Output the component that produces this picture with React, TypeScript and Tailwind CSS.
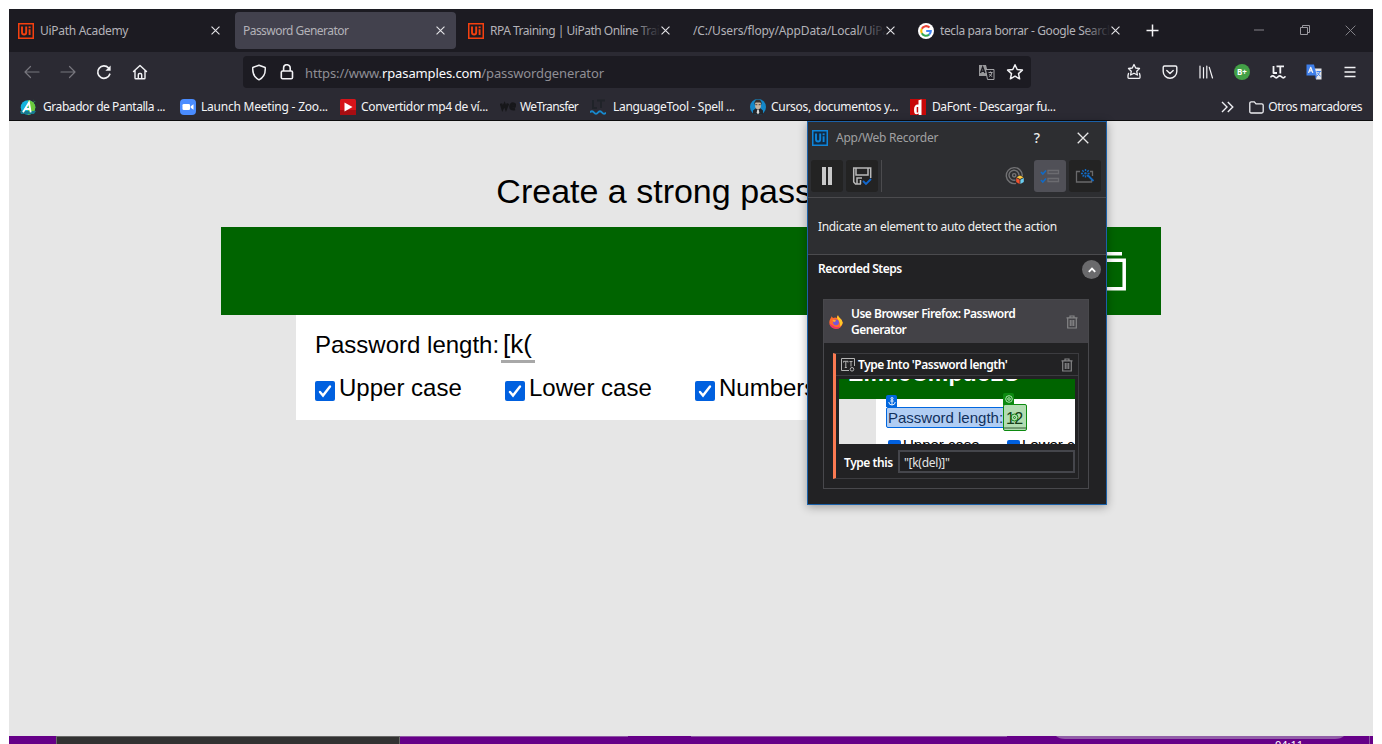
import type { ReactNode } from "react";

const ui = "font-['Noto_Sans',sans-serif]";

function UiLogo({ color, bg }: { color: string; bg: string }) {
  return (
    <svg width="16" height="16" viewBox="0 0 16 16" className="shrink-0">
      <rect width="16" height="16" fill={color} />
      <rect x="1.5" y="1.5" width="13" height="13" fill={bg} />
      <path d="M4 3.500v5.700q0 2.300 2.100 2.300t2.100-2.300V3.500M11.600 6.200v5.900" stroke={color} strokeWidth="1.900" fill="none" />
      <rect x="10.600" y="3.400" width="2" height="1.800" fill={color} />
    </svg>
  );
}

function GoogleLogo() {
  return (
    <svg width="16" height="16" viewBox="0 0 16 16" className="shrink-0">
      <circle cx="8" cy="8" r="8" fill="#fff" />
      <g fill="none" strokeWidth="2.1">
        <path d="M11.5 4.6A4.8 4.8 0 0 0 3.8 5.7" stroke="#ea4335" />
        <path d="M3.8 5.7a4.8 4.8 0 0 0 0 4.6" stroke="#fbbc05" />
        <path d="M3.8 10.3a4.8 4.8 0 0 0 7.3 1.3" stroke="#34a853" />
        <path d="M11.1 11.6A4.8 4.8 0 0 0 12.8 8H8.2" stroke="#4285f4" />
      </g>
    </svg>
  );
}

function Cross({ size, color, w }: { size: number; color: string; w: number }) {
  return (
    <svg width={size} height={size} viewBox="0 0 10 10" className="shrink-0">
      <path d="M.6.6l8.8 8.8M9.4.6L.6 9.4" stroke={color} strokeWidth={w} fill="none" />
    </svg>
  );
}

function Tab({ icon, title, fade, active, track }: { icon?: ReactNode; title: string; fade?: boolean; active?: boolean; track: string }) {
  return (
    <div className="flex h-full w-[225px] shrink-0 py-[3px] pr-1">
      <div className={"flex w-[221px] items-center rounded-[4px] pl-2 pr-[11.5px] " + (active ? "bg-[#42414d]" : "")}>
        {icon && <span className="mr-[6px] flex">{icon}</span>}
        <span className={"relative min-w-0 flex-1 overflow-hidden whitespace-nowrap text-[12px] leading-[18px] text-[#b3b2b8] " + track}>
          {title}
          {fade && <span className="absolute inset-y-0 right-0 w-7 bg-gradient-to-r from-transparent to-[#1c1b22]" />}
        </span>
        <Cross size={9} color="#e4e4e8" w={1.25} />
      </div>
    </div>
  );
}

function Bookmark({ icon, title, width, gap, track }: { icon: ReactNode; title: string; width: string; gap: string; track: string }) {
  return (
    <div className={"flex shrink-0 items-center " + width + " " + gap}>
      {icon}
      <span className={"whitespace-nowrap text-[12px] leading-[16px] text-[#f4f4f6] " + track}>{title}</span>
    </div>
  );
}

function ToolIcon({ children }: { children: ReactNode }) {
  return (
    <div className="flex w-9 shrink-0 items-center justify-center">
      <svg width="18" height="18" viewBox="0 0 18 18" fill="none" stroke="#f2f2f5" strokeWidth="1.4" strokeLinecap="round" strokeLinejoin="round">
        {children}
      </svg>
    </div>
  );
}

function TabBar() {
  const logo = <UiLogo color="#f4400f" bg="#1c1b22" />;
  return (
    <div className="flex h-[43px] bg-[#1c1b22] pl-px">
      <Tab icon={logo} title="UiPath Academy" track="tracking-[-0.3px]" />
      <Tab title="Password Generator" active track="tracking-[-0.54px]" />
      <Tab icon={logo} title="RPA Training | UiPath Online Training" fade track="tracking-[-0.48px]" />
      <Tab title="/C:/Users/flopy/AppData/Local/UiPath" fade track="tracking-[-0.16px]" />
      <Tab icon={<GoogleLogo />} title="tecla para borrar - Google Search" fade track="tracking-[-0.37px]" />
      <div className="flex w-[35px] items-center justify-center">
        <svg width="13" height="13" viewBox="0 0 13 13"><path d="M6.5.5v12M.5 6.5h12" stroke="#f4f4f6" strokeWidth="1.5" /></svg>
      </div>
      <div className="ml-auto flex pb-px">
        <div className="flex w-[46px] items-center justify-center"><svg width="10" height="2"><path d="M0 1h10" stroke="#85848a" /></svg></div>
        <div className="flex w-[46px] items-center justify-center">
          <svg width="11" height="11" fill="none" stroke="#9a999f"><path d="M.5 2.5h7v7h-7zM2.5 2.5v-2h7v7h-2" /></svg>
        </div>
        <div className="flex w-[45px] items-center justify-center"><Cross size={11} color="#85848a" w={0.9} /></div>
      </div>
    </div>
  );
}

function NavBar() {
  return (
    <div className="flex h-10 items-center bg-[#2b2a33] pl-[5px] pr-[5px]">
      <ToolIcon><path d="M16 9H2M7.5 3.5L2 9l5.5 5.5" stroke="#77767e" strokeWidth="1.2" /></ToolIcon>
      <ToolIcon><path d="M2 9h14M10.5 3.5L16 9l-5.5 5.5" stroke="#77767e" strokeWidth="1.2" /></ToolIcon>
      <ToolIcon><path d="M14.8 11.2A6.2 6.2 0 1 1 13.6 5" strokeWidth="1.7" /><path d="M15.6 2.6v5.2h-5.2z" fill="#f2f2f5" stroke="none" /></ToolIcon>
      <ToolIcon><path d="M2.5 8.5L9 2.5l6.5 6M4 7.5V15q0 .8.8.8h8.4q.8 0 .8-.8V7.5M7.3 15.5v-3.8q0-1.2 1.2-1.2h1q1.2 0 1.2 1.2v3.8" /></ToolIcon>
      <div className="ml-[85px] flex h-8 w-[788px] items-center rounded-[4px] bg-[#1c1b22] pl-2">
        <svg width="16" height="17" viewBox="0 0 16 17" fill="none" stroke="#f2f2f5" strokeWidth="1.5" strokeLinejoin="round"><path d="M8 1.2l6.2 2.3c.5 5.8-1.2 9.8-6.2 12.3C3 13.300 1.300 9.300 1.800 3.500z" /></svg>
        <svg width="14" height="16" viewBox="0 0 14 16" className="ml-[13px]" fill="none" stroke="#f2f2f5" strokeWidth="1.6"><rect x="1.300" y="7" width="11.200" height="7.800" rx="1.300" /><path d="M3.600 7V4a3.300 3.300 0 0 1 6.600 0v3" /></svg>
        <span className="ml-[11px] mt-[2px] flex-1 whitespace-nowrap text-[13px] leading-5 tracking-[-0.12px] text-[#8f8e95]">
          https://www.<span className="text-[#fbfbfe]">rpasamples.com</span>/passwordgenerator
        </span>
        <svg width="17" height="17" viewBox="0 0 17 17">
          <path d="M1 1h7l3 11H1z" fill="#98989b" />
          <path d="M7.500 5.500H16v10H9.500z" fill="#1c1b22" stroke="#a5a5a8" />
          <path d="M2.500 9L4.700 3l2.200 6M3.300 7.200h2.800" stroke="#1c1b22" strokeWidth="1.400" fill="none" />
          <path d="M10.500 8.500h4M12.500 7.500v1M14 8.500q-.5 3-3 4M11.500 10q1 2 2.700 2.500" stroke="#a5a5a8" fill="none" />
        </svg>
        <svg width="18" height="18" viewBox="0 0 18 18" className="ml-[11px] mr-[7px]" fill="none" stroke="#f2f2f5" strokeWidth="1.500" strokeLinejoin="round"><path d="M9 1.700l2.200 4.800 5.200.6-3.900 3.500 1.100 5.200L9 13.200l-4.600 2.600 1.100-5.200-3.900-3.500 5.200-.6z" /></svg>
      </div>
      <div className="ml-auto flex">
        <ToolIcon><path d="M9 1.500l1.700 3.500 3.800.5-2.800 2.700.7 3.800L9 10.200 5.600 12l.7-3.800-2.800-2.700 3.800-.5zM3.500 10.500L3 12.500v2q0 .8.800.8h10.400q.8 0 .8-.8v-2l-.5-2" strokeWidth="1.300" /></ToolIcon>
        <ToolIcon><path d="M3.500 3h11q1.300 0 1.300 1.300V8.500a6.800 6.800 0 0 1-13.600 0V4.300Q2.200 3 3.500 3zM5.800 7.500L9 10.600l3.200-3.100" /></ToolIcon>
        <ToolIcon><path d="M3 3v12M6.500 4.500V15M9.800 3v12M12.300 4.300L15.500 15" strokeWidth="1.200" /></ToolIcon>
        <div className="flex w-9 items-center justify-center">
          <div className="flex size-4 items-center justify-center rounded-full bg-[#43a047] text-[8px] font-bold leading-none text-white">B+</div>
        </div>
        <ToolIcon><path d="M4.500 3v7H8M7.500 3.300H15M11.300 3.300V10.500" strokeWidth="1.800" strokeLinecap="butt" /><path d="M2 13.800q1.700-2 3.500 0t3.500 0 3.500 0 3.500 0" strokeWidth="1.700" /></ToolIcon>
        <ToolIcon>
          <g stroke="none"><path d="M9 5.500h7.500v11H11z" fill="#e4e6eb" /><path d="M1.500 1.500H9l2.800 11H1.500z" fill="#3f7fea" /><path d="M9.500 12.500h2.300L11 16.500z" fill="#2456bd" /></g>
          <path d="M3.700 9.500L5.700 4.300l2 5.200M4.400 7.800H7" strokeWidth="1.200" /><path d="M11.900 8.500h3.600M14.700 8.500q-.5 3-2.500 4.500M12.500 10q1 2 2.800 3" stroke="#4285f4" strokeWidth="1" />
        </ToolIcon>
        <ToolIcon><path d="M3.500 4.500h11M3.500 9h11M3.500 13.500h11" strokeLinecap="butt" /></ToolIcon>
      </div>
    </div>
  );
}

function BookmarksBar() {
  return (
    <div className="flex h-[29px] items-center border-b border-[#0c0c0d] bg-[#2b2a33] pl-[11px] pr-[11px] pt-[2px]">
      <Bookmark width="w-[160px]" gap="gap-[7px]" title="Grabador de Pantalla ..." track="tracking-[-0.43px]" icon={
        <svg width="16" height="16" viewBox="0 0 16 16"><circle cx="8" cy="8.500" r="7.300" fill="#14b4dc" /><path d="M8 1.200a7.300 7.300 0 0 1 0 14.600z" fill="#6cc93c" /><path d="M0 12h16l-2 3H1z" fill="#167b8f" /><path d="M3 13.300L9 3.500l1.700 9.800M5.500 10h5" stroke="#fff" strokeWidth="1.800" fill="none" /><path d="M13 0l1 2 2 .5-2 .8" fill="#2f7b50" /></svg>} />
      <Bookmark width="w-[160px]" gap="gap-[5px]" title="Launch Meeting - Zoo..." track="tracking-[-0.22px]" icon={
        <svg width="16" height="16" viewBox="0 0 16 16"><rect width="16" height="16" rx="4" fill="#4a8cff" /><rect x="2.500" y="5" width="7.500" height="6" rx="1.300" fill="#fff" /><path d="M10.700 7.200L13.500 5.200v5.600l-2.800-2z" fill="#fff" /></svg>} />
      <Bookmark width="w-[160px]" gap="gap-[5px]" title="Convertidor mp4 de ví..." track="tracking-[-0.33px]" icon={
        <svg width="16" height="16" viewBox="0 0 16 16"><rect width="16" height="16" rx="1.500" fill="#d6141a" /><path d="M0 11h16v5H0z" fill="#a80d12" /><path d="M4.500 3.500v9L12.500 8z" fill="#fff" /></svg>} />
      <Bookmark width="w-[90px]" gap="gap-[4px]" title="WeTransfer" track="tracking-[-0.6px]" icon={
        <svg width="16" height="16" viewBox="0 0 16 16" fill="none" stroke="#17171a" strokeWidth="2.600"><path d="M1 4.500l1.500 5 2-4 1.500 4 2-5M15 10q-4.500 1-4.500-2.300t3-3q2 .3 1 2.800h-3.500" /></svg>} />
      <Bookmark width="w-[160px]" gap="gap-[7px]" title="LanguageTool - Spell ..." track="tracking-[-0.32px]" icon={
        <svg width="16" height="16" viewBox="0 0 16 16" fill="none"><path d="M3 1v8h4M7 1.500h8M11 1.500V9" stroke="#202329" strokeWidth="2" /><path d="M0 13.500q2-2.500 4 0t4 0 4 0 4 0" stroke="#1789ce" strokeWidth="2" /></svg>} />
      <Bookmark width="w-[160px]" gap="gap-[5px]" title="Cursos, documentos y..." track="tracking-[-0.3px]" icon={
        <svg width="16" height="16" viewBox="0 0 16 16"><circle cx="8" cy="8" r="8" fill="#1488c9" /><path d="M3 15v-3.500L6 9h4l3 2.500V15q-5 2-10 0z" fill="#23262c" /><ellipse cx="8" cy="6" rx="3" ry="4.200" fill="#c9b49e" /><path d="M4.300 6Q4 .5 8 .5T11.700 6L10.500 3.500h-5z" fill="#34312f" /><path d="M5.300 5.700h2M8.700 5.700h2" stroke="#4a4038" /><path d="M7.300 10.500h1.400l.6 3L8 15.500l-1.300-2z" fill="#d8d8d8" /></svg>} />
      <Bookmark width="w-[160px]" gap="gap-[6px]" title="DaFont - Descargar fu..." track="tracking-[-0.39px]" icon={
        <svg width="16" height="16" viewBox="0 0 16 16"><rect width="16" height="16" fill="#c80808" /><path d="M8.500 1.200l3-.7V16H8.700v-1.500Q4 17 4 11t4.500-5.500z" fill="#fff" /><path d="M6.700 8h1.500v5.500H6.700z" fill="#c80808" /></svg>} />
      <div className="ml-auto flex shrink-0 items-center">
        <svg width="13" height="12" viewBox="0 0 13 12" fill="none" stroke="#eeeef2" strokeWidth="1.400"><path d="M1 1l5 5-5 5M6.800 1l5 5-5 5" /></svg>
        <svg width="15" height="13" viewBox="0 0 15 13" className="ml-[15px] mr-1" fill="none" stroke="#eeeef2" strokeWidth="1.300"><path d="M.8 2.300Q.8.800 2.300.8h3l1.700 2h5.700q1.500 0 1.500 1.500v6.200q0 1.500-1.500 1.500H2.300Q.8 12 .8 10.500z" /></svg>
        <span className="whitespace-nowrap text-[12px] leading-[16px] tracking-[-0.49px] text-[#f4f4f6]">Otros marcadores</span>
      </div>
    </div>
  );
}

function CheckItem({ label }: { label: string }) {
  return (
    <div className="flex w-[190px] shrink-0">
      <span className="mt-[7px] flex size-5 shrink-0 items-center justify-center rounded-[2px] bg-[#0060df]">
        <svg width="16" height="16" viewBox="0 0 16 16" fill="none" stroke="#fff" strokeWidth="2.400" strokeLinecap="round"><path d="M3 9l3 3.500L13 3.500" /></svg>
      </span>
      <span className="ml-[4px] whitespace-nowrap text-[24px] leading-[27px] text-black">{label}</span>
    </div>
  );
}

function Trash() {
  return (
    <svg width="12" height="14" viewBox="0 0 12 14" fill="none" stroke="#858587" strokeWidth="1.200" className="shrink-0"><path d="M.5 2.800h11M4 2.800V1h4v1.800M1.700 3v10h8.600V3M4.300 5v6M6 5v6M7.700 5v6" /></svg>
  );
}

function FirefoxLogo() {
  return (
    <svg width="14" height="14" viewBox="0 0 14 14">
      <path d="M1.200 4Q2.500 2.500 2.500 1.200L4 3q2.500-1 4 0Q7.800 1.500 9 .3q.2 1.500 2 3 2.700 2 2.700 4.500A6.300 6.300 0 0 1 7 13.700 6.300 6.300 0 0 1 .3 7.500Q.3 5.500 1.200 4z" fill="#ff6b2c" />
      <path d="M9 .3q.2 1.500 2 3 2.700 2 2.700 4.500-.5 3-3 3.700Q12 8 8 3q0-1.700 1-2.700z" fill="#ffc928" />
      <path d="M.4 8.500Q1.500 13.500 7 13.700q3 0 4.700-2.200-5 2-8-1z" fill="#f0326a" />
      <circle cx="7" cy="7.300" r="2.900" fill="#7656d8" />
      <path d="M3.300 5q2-.7 4 .8L5 7.300z" fill="#ffae2b" />
    </svg>
  );
}

function Preview() {
  return (
    <div className="relative h-[65px] w-[236px] overflow-hidden bg-white font-['Liberation_Sans',sans-serif]">
      <div className="h-5 bg-[#006400]" />
      <div className="h-[45px] w-[37px] bg-[#e5e5e5]" />
      <span className="absolute left-[9px] top-[-19px] whitespace-nowrap text-[23px] font-bold leading-[26px] tracking-[0.1px] text-white">EmfIeCmpuo2S</span>
      <span className="absolute left-[47px] top-[28px] flex h-[21px] w-[119px] items-center whitespace-nowrap rounded-[2px] border border-[#0067df] bg-[#b0cdf3] pl-px text-[15px] leading-none text-[#10305c]">Password length:</span>
      <span className="absolute left-[47px] top-[16px] flex h-[12px] w-[11px] items-center justify-center rounded-t-[2px] bg-[#0067df]">
        <svg width="8" height="9" viewBox="0 0 8 9" fill="none" stroke="#fff" strokeWidth=".9"><circle cx="4" cy="1.500" r="1" /><path d="M4 2.500V8M2.300 4h3.400M.7 5Q1 8 4 8t3.300-3" /></svg>
      </span>
      <span className="absolute left-[164px] top-[25px] h-[27px] w-[24px] rounded-[2px] border border-[#0c8a10] bg-[#b2dcb2] pl-[2px] pt-[5px] text-[16px] leading-[17px] tracking-[-0.600px] text-[#143d17]">
        12
        <svg width="9" height="9" viewBox="0 0 9 9" className="absolute left-[6px] top-[8px]" fill="none" stroke="#178a1c"><circle cx="4.500" cy="4.500" r="3.500" /><circle cx="4.500" cy="4.500" r="1" /></svg>
        <i className="absolute bottom-[1px] left-0 h-[2px] w-[22px] bg-[#739b73]" />
      </span>
      <span className="absolute left-[164px] top-[14px] flex h-[12px] w-[11px] items-center justify-center rounded-t-[2px] bg-[#0c8a10]">
        <svg width="8" height="8" viewBox="0 0 8 8" fill="none" stroke="#d8f2d8" strokeWidth=".8"><circle cx="4" cy="4" r="3.300" /><circle cx="4" cy="4" r="1.300" /></svg>
      </span>
      <i className="absolute left-[49px] top-[61px] h-[13px] w-[13px] rounded-[2px] bg-[#0060df]" />
      <span className="absolute left-[64px] top-[57px] whitespace-nowrap text-[15px] leading-[17px] text-black">Upper case</span>
      <i className="absolute left-[168px] top-[61px] h-[13px] w-[13px] rounded-[2px] bg-[#0060df]" />
      <span className="absolute left-[183px] top-[57px] whitespace-nowrap text-[15px] leading-[17px] text-black">Lower case</span>
    </div>
  );
}

function RecorderPanel() {
  return (
    <section className={"absolute left-[807px] top-[121px] flex h-[384px] w-[300px] flex-col border border-[#1b61a8] bg-[#222224] shadow-[0_2px_9px_rgba(0,0,0,0.32)] " + ui}>
      <header className="flex h-8 items-center bg-[#2d2e31] pl-[4px] pr-[17px]">
        <UiLogo color="#0f84d8" bg="#122a42" />
        <span className="ml-2 whitespace-nowrap text-[12px] leading-4 tracking-[-0.250px] text-[#a0a0a2]">App/Web Recorder</span>
        <span className="ml-auto text-[14px] font-medium leading-4 text-[#ececec]">?</span>
        <span className="ml-[37px] flex"><Cross size={12} color="#e8e8e8" w={1.1} /></span>
      </header>
      <div className="flex h-[44px] items-center border-b border-[#4b4b4e] bg-[#2d2e31] pl-[3px] pr-[5px]">
        <div className="flex size-8 items-center justify-center rounded-[3px] bg-[#232323]">
          <svg width="10" height="18"><path d="M2 0v18M8 0v18" stroke="#c9c9c9" strokeWidth="4" /></svg>
        </div>
        <div className="ml-[3px] flex size-8 items-center justify-center rounded-[3px] bg-[#232323]">
          <svg width="20" height="20" viewBox="0 0 20 20" fill="none" stroke="#b9b9b9" strokeWidth="1.500"><path d="M9 18H3.500L1.700 16V2h17v10M4 2v7h12V2M5 18v-6h5M8.500 14v4" /><path d="M11 15l3 3 5-5" stroke="#1268cf" strokeWidth="1.800" /></svg>
        </div>
        <i className="ml-[3px] h-8 w-px bg-[#4b4b4e]" />
        <svg width="20" height="20" viewBox="0 0 20 20" className="ml-auto mr-[9px] mt-px" fill="none" stroke="#727274" strokeWidth="1.400">
          <path d="M11 17.400A8 8 0 1 1 17.300 10M10.500 14A5 5 0 1 1 14 9.500" /><circle cx="9.200" cy="9.300" r="1.700" />
          <path d="M15 9.500l3.500 1.700L15 13l-3.500-1.800z" fill="#ffc83d" stroke="none" /><path d="M11.200 12l3.400 1.700v4.300l-3.400-2z" fill="#f4512c" stroke="none" /><path d="M18.800 12l-3.400 1.700v4.300l3.400-2z" fill="#6ccdf0" stroke="none" />
        </svg>
        <div className="flex size-8 items-center justify-center rounded-[3px] bg-[#505057]">
          <svg width="20" height="16" viewBox="0 0 20 16" fill="none"><path d="M8 2.500h10.500v3H8zM8 10.500h10.500v3H8z" stroke="#6b6b70" strokeWidth="1.300" /><path d="M1 4l1.800 2L6 2.500M1 12l1.800 2L6 10.500" stroke="#126ac4" strokeWidth="1.600" /></svg>
        </div>
        <div className="ml-[3px] flex size-8 items-center justify-center rounded-[3px] bg-[#232323]">
          <svg width="20" height="16" viewBox="0 0 20 16" fill="none"><path d="M5 3.500H1.500v10.500h15v-2M15 3.500h2.500V8" stroke="#69696b" strokeWidth="1.300" /><path d="M12.500 7l6 6" stroke="#126ac4" strokeWidth="1.800" /><path d="M10.500 1v9M6 5.500h9M7.300 2.300l6.400 6.400M13.700 2.300L7.300 8.700" stroke="#126ac4" strokeWidth="1.400" strokeDasharray="2 1.300" /></svg>
        </div>
      </div>
      <div className="flex h-[57px] items-center border-b border-[#4b4b4e] bg-[#2d2e31] pl-[10px]">
        <span className="mt-[2px] whitespace-nowrap text-[12px] leading-4 tracking-[-0.330px] text-[#f0f0f0]">Indicate an element to auto detect the action</span>
      </div>
      <div className="flex h-[44px] justify-between pl-[10px] pr-[5px] pt-[5px]">
        <span className="whitespace-nowrap text-[12px] font-semibold leading-[17px] tracking-[-0.460px] text-white">Recorded Steps</span>
        <span className="flex size-[19px] items-center justify-center rounded-full bg-[#6a6a6c]">
          <svg width="8" height="6" viewBox="0 0 8 6" fill="none" stroke="#fff" strokeWidth="1.900"><path d="M.8 4.800L4 1.600l3.200 3.200" /></svg>
        </span>
      </div>
      <div className="ml-[15px] h-[190px] w-[266px] border border-[#48484c] bg-[#222224]">
        <div className="flex h-[43px] items-center bg-[#434247] pl-[5px] pr-[10px]">
          <FirefoxLogo />
          <span className="ml-[8px] w-[200px] whitespace-nowrap text-[12px] font-semibold leading-4 tracking-[-0.510px] text-white">Use Browser Firefox: Password<br />Generator</span>
          <span className="ml-auto flex"><Trash /></span>
        </div>
        <div className="ml-[9px] mt-[10px] h-[126px] w-[246px] border border-l-[3px] border-[#3c3c40] border-l-[#fb7a52]">
          <div className="flex h-[22px] items-center border-b border-[#3c3c40] pl-[5px] pr-[5px]">
            <svg width="14" height="14" viewBox="0 0 14 14" fill="none" stroke="#b4b4b4"><path d="M8 12.500H.5V.5h13V8M2.500 4.500V3.300H7v1.200M4.800 3.500v6M3.800 9.500h2M8.500 3.500h3M10 3.500v5" /><circle cx="11" cy="11.300" r="1.800" /></svg>
            <span className="ml-[3px] whitespace-nowrap text-[12px] font-semibold leading-4 tracking-[-0.450px] text-white">Type Into 'Password length'</span>
            <span className="ml-auto flex"><Trash /></span>
          </div>
          <div className="pl-[3px] pt-[3px]"><Preview /></div>
          <div className="mt-[6px] flex items-center pl-2">
            <span className="w-[54px] whitespace-nowrap pt-[2px] text-[12px] font-semibold leading-4 tracking-[-0.450px] text-white">Type this</span>
            <span className="flex h-[23px] w-[177px] items-center border-2 border-[#45464c] bg-[#202022] pl-[4px] pt-[2px] text-[12px] leading-4 tracking-[-0.300px] text-[#e4e4e4]">"[k(del)]"</span>
          </div>
        </div>
      </div>
    </section>
  );
}

function WebPage() {
  return (
    <main className="flex h-[615px] flex-col items-center bg-[#e6e6e6] font-['Liberation_Sans',sans-serif]">
      <h1 className="mt-[50px] h-[56px] text-[34px] leading-[40px] text-black">Create a strong password</h1>
      <div className="flex h-[88px] w-[940px] justify-end bg-[#006400] pr-[35px] pt-[25px]">
        <svg width="36" height="39" fill="none" stroke="#fff" strokeWidth="3.500"><path d="M1.800 33V1.800H32" /><path d="M8 8.200h26.200v28.500H8z" /></svg>
      </div>
      <div className="h-[105px] w-[790px] bg-white pl-[19px] pt-[14px]">
        <div className="flex h-[45px] text-[24px] leading-[32px] text-black">
          <span className="w-[186px] whitespace-nowrap">Password length:</span>
          <span className="h-[34px] w-[34px] border-b-[3px] border-[#a8a8a8] pl-[2px] text-[26px] leading-[31px]">[k(</span>
        </div>
        <div className="flex"><CheckItem label="Upper case" /><CheckItem label="Lower case" /><CheckItem label="Numbers" /></div>
      </div>
    </main>
  );
}

function Taskbar() {
  return (
    <footer className={"flex h-2 overflow-hidden bg-[#660088] " + ui}>
      <div className="w-[47px] shrink-0" />
      <div className="w-[344px] shrink-0 border-x border-t border-[#686868] bg-[#323232]" />
      <div className="h-px w-[228px] shrink-0 bg-[#8f55a5]" />
      <div className="ml-[63px] h-px w-[316px] shrink-0 bg-[#8f55a5]" />
      <svg width="288" height="3" className="ml-[49px] shrink-0"><path d="M0 0h288q-3 3-9 3H9Q3 3 0 0z" fill="#925ea8" /></svg>
      <div className="relative w-[26px] shrink-0 border-r border-[#8f55a5]">
        <span className="absolute left-[-69px] top-[1px] text-[11px] leading-[15px] text-white">04:11</span>
      </div>
    </footer>
  );
}

export default function App() {
  return (
    <div className={"relative h-[744px] w-[1382px] overflow-hidden bg-white pl-[9px] pt-[9px] " + ui}>
      <div className="w-[1364px]">
        <TabBar />
        <NavBar />
        <BookmarksBar />
        <WebPage />
        <Taskbar />
      </div>
      <RecorderPanel />
    </div>
  );
}
